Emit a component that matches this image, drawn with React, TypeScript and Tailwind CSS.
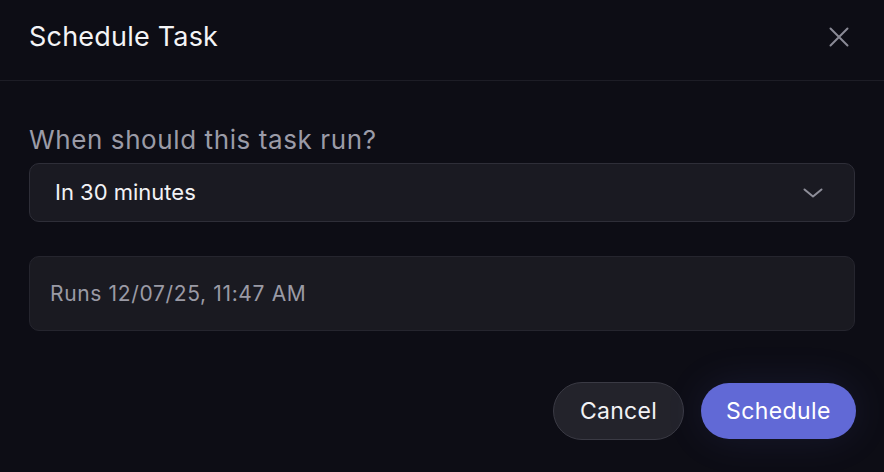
export default function App() {
  return (
    <div
      className="w-[884px] h-[472px] bg-[#0d0d15] text-white flex flex-col"
      style={{ fontFamily: "Inter, 'Noto Sans', sans-serif" }}
    >
      {/* Header */}
      <div className="h-[81px] shrink-0 px-[29px] pb-[7px] flex items-center justify-between border-b border-[#1d1d26]">
        <h2 className="text-[27px] leading-[32px] tracking-[0.2px] text-[#f4f4f6]">Schedule Task</h2>
        <button className="text-[#8a8a95] mr-[6px]" aria-label="Close">
          <svg width="20" height="20" viewBox="0 0 20 20" fill="none" stroke="currentColor" strokeWidth="2" strokeLinecap="round">
            <path d="M1.5 1.5 18.5 18.5M18.5 1.5 1.5 18.5" />
          </svg>
        </button>
      </div>

      {/* Body */}
      <div className="flex-1 px-[29px] pt-[43px] flex flex-col">
        <label className="text-[26px] leading-[32px] tracking-[0.6px] text-[#9b9ba7]">When should this task run?</label>
        <div className="mt-[7px] h-[59px] rounded-[10px] bg-[#1a1a22] border border-[#2e2e38] flex items-center justify-between pl-[25px] pr-[31px]">
          <span className="text-[22px] text-[#f2f2f5]">In 30 minutes</span>
          <svg width="20" height="10" viewBox="0 0 20 10" fill="none" stroke="#8e8e99" strokeWidth="2" strokeLinecap="round" strokeLinejoin="round">
            <path d="M1.5 1.5 10 8.5 18.5 1.5" />
          </svg>
        </div>

        <div className="mt-[34px] h-[75px] rounded-[10px] bg-[#1a1a21] border border-[#25252e] flex items-center px-[20px]">
          <span className="text-[21px] tracking-[0.65px] text-[#9a9aa5] mt-[1px]">Runs 12/07/25, 11:47 AM</span>
        </div>

        <div className="mt-[51px] -mr-[1px] flex justify-end gap-[17px]">
          <button className="h-[58px] w-[131px] rounded-full bg-[#23232b] border border-[#3a3a44] text-[23px] tracking-[0.3px] text-[#f2f2f5]">
            Cancel
          </button>
          <button className="h-[56px] w-[155px] mt-[1px] rounded-full bg-[#6169d6] text-[23px] tracking-[0.4px] text-white shadow-[0_0_40px_rgba(97,105,214,0.12)]">
            Schedule
          </button>
        </div>
      </div>
    </div>
  );
}
